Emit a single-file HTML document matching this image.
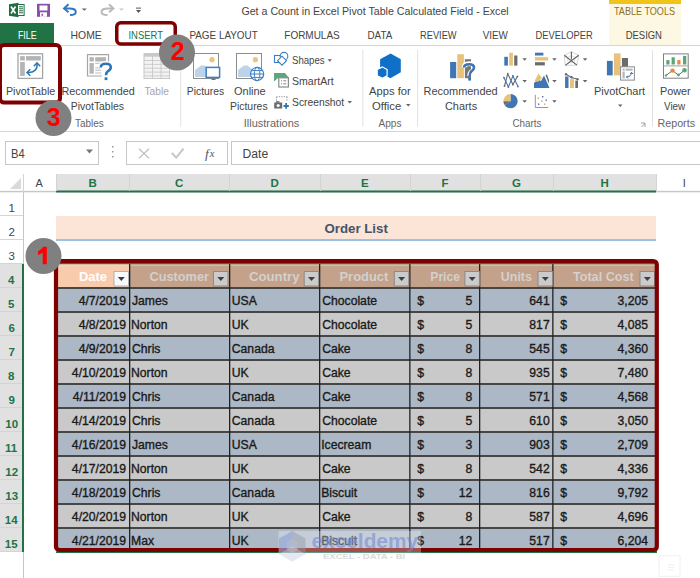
<!DOCTYPE html>
<html><head><meta charset="utf-8">
<style>
*{margin:0;padding:0}
html,body{width:700px;height:578px;overflow:hidden;background:#fff}
svg{position:absolute;left:0;top:0;font-family:"Liberation Sans",sans-serif}
</style></head><body>
<svg width="700" height="578" viewBox="0 0 700 578">
<rect x="609" y="0" width="72" height="45" fill="#fdf8e3"/>
<rect x="609" y="0" width="72" height="4" fill="#f0c419"/>
<rect x="0" y="23" width="54" height="22" fill="#217346"/>
<rect x="0" y="45" width="700" height="1" fill="#d5d5d5"/>
<rect x="0" y="131" width="700" height="1" fill="#d5d5d5"/>
<rect x="180.2" y="50" width="1" height="76.5" fill="#e1e1e1"/>
<rect x="362.3" y="50" width="1" height="76.5" fill="#e1e1e1"/>
<rect x="417.1" y="50" width="1" height="76.5" fill="#e1e1e1"/>
<rect x="652" y="50" width="1" height="76.5" fill="#e1e1e1"/>
<rect x="659" y="555.8" width="21" height="20.5" fill="#fff" stroke="#f0f0f0" stroke-width="1"/>
<path d="M668 565 h7 M668 567.5 h6 M668 570 h6" stroke="#eef1f5" stroke-width="1"/>
<g id="qat">
  <!-- excel logo -->
  <path d="M9 4.2 L18.5 2.7 L18.5 17.3 L9 15.8 Z" fill="#1d6f42"/>
  <rect x="17.5" y="4.5" width="6.6" height="11" fill="#fff" stroke="#1d6f42" stroke-width="1"/>
  <path d="M19 6.8 h4 M19 8.8 h4 M19 10.8 h4 M19 12.8 h4" stroke="#1d6f42" stroke-width="1"/>
  <path d="M11 6.5 L15.5 13.5 M15.5 6.5 L11 13.5" stroke="#fff" stroke-width="1.6"/>
  <!-- save -->
  <path d="M37 3.8 h13 v13 h-13 z" fill="#8c4ca8"/>
  <rect x="39.5" y="5.5" width="8" height="5" fill="#fff"/>
  <rect x="40" y="12.3" width="7" height="4.5" fill="#fff"/>
  <rect x="41.5" y="13.8" width="1.5" height="2" fill="#8c4ca8"/>
  <!-- undo -->
  <path d="M64.5 8.5 L69.5 8.5 Q75.8 8.5 75.8 12 Q75.8 15 70 15" fill="none" stroke="#2f78c1" stroke-width="1.9"/>
  <path d="M68.5 4.2 L64 8.5 L68.5 12.2" fill="none" stroke="#2f78c1" stroke-width="1.9"/>
  <path d="M81.7 8.4 h5.2 l-2.6 2.4z" fill="#666"/>
  <!-- redo -->
  <path d="M113 8.5 L108 8.5 Q101.5 8.5 101.5 12 Q101.5 15 107.5 15" fill="none" stroke="#b9b9b9" stroke-width="1.9"/>
  <path d="M109 4.2 L113.5 8.5 L109 12.2" fill="none" stroke="#b9b9b9" stroke-width="1.9"/>
  <path d="M119 8.4 h5 l-2.5 2.4z" fill="#c8c8c8"/>
  <!-- customize -->
  <rect x="136" y="7.6" width="5" height="1" fill="#555"/>
  <path d="M136 10 h5 l-2.5 3z" fill="#555"/>
</g>
<g id="ribbon">
  <!-- PivotTable -->
  <rect x="18" y="53.8" width="24.6" height="24.6" fill="#fff" stroke="#a6a6a6" stroke-width="1.3"/>
  <rect x="20.1" y="56.1" width="4.7" height="4.4" fill="#b4b4b4"/>
  <rect x="26" y="56.1" width="14.8" height="4.4" fill="#b4b4b4"/>
  <rect x="20.1" y="62" width="4.7" height="14" fill="#b4b4b4"/>
  <path d="M27.2 72.5 C34 73 37.8 69.5 37 63" fill="none" stroke="#2e75b6" stroke-width="1.6"/>
  <path d="M30.3 69.3 L27 72.5 L30.3 75.7 M33.8 66.2 L37 62.8 L40.2 66.2" fill="none" stroke="#2e75b6" stroke-width="1.5"/>
  <!-- Recommended PivotTables -->
  <path d="M102 76 H87.5 V54.7 H108.5 V62" fill="#fff" stroke="#a6a6a6" stroke-width="1.2"/>
  <rect x="89.5" y="57.2" width="4.3" height="4.3" fill="#b4b4b4"/>
  <rect x="95.2" y="57.2" width="10.8" height="4.3" fill="#b4b4b4"/>
  <rect x="89.5" y="63" width="4.3" height="10.7" fill="#b4b4b4"/>
  <path d="M95.2 63.3 h7 M95.2 68 h5 M95.2 70.3 h6 M95.2 73 h6" stroke="#b4b4b4" stroke-width="0.9"/>
  <path d="M100.8 67.5 Q100.8 63.3 106 63.3 Q111 63.3 111 67.2 Q111 70 108 71.5 Q106 72.5 106 75.3" fill="none" stroke="#fff" stroke-width="4.5"/>
  <path d="M100.8 67.5 Q100.8 63.8 106 63.8 Q110.8 63.8 110.8 67.2 Q110.8 69.6 108 71.2 Q106 72.4 106 75.3" fill="none" stroke="#2e75b6" stroke-width="2.6"/>
  <rect x="104.6" y="77.3" width="2.8" height="2.8" fill="#2e75b6"/>
  <!-- Table (disabled) -->
  <rect x="144" y="53.5" width="25.5" height="25" fill="#f3f3f3" stroke="#c8c8c8" stroke-width="1"/>
  <rect x="144" y="53.5" width="25.5" height="3.2" fill="#c8c8c8"/>
  <path d="M152.5 53.5 V78.5 M161 53.5 V78.5 M144 60.5 H169.5 M144 64.4 H169.5 M144 68.2 H169.5 M144 72.1 H169.5 M144 75.9 H169.5" stroke="#c8c8c8" stroke-width="0.9"/>
  <!-- Pictures -->
  <rect x="193.5" y="53.5" width="25" height="25" fill="#fff" stroke="#8c8c8c" stroke-width="1"/>
  <circle cx="212" cy="59.7" r="2.6" fill="#f0c27b"/>
  <path d="M195 77 V70 L201 65.5 L204.5 65.5 L210 70 V77 Z" fill="#bdd3e8"/>
  <rect x="206.2" y="67.4" width="13.4" height="10" fill="#fff" stroke="#3c7fc5" stroke-width="1.5"/>
  <path d="M211.5 79.3 h4 M213.5 77.8 v1.5" stroke="#3c7fc5" stroke-width="1.2"/>
  <!-- Online Pictures -->
  <rect x="236.5" y="53.5" width="25" height="25" fill="#fff" stroke="#8c8c8c" stroke-width="1"/>
  <circle cx="255.4" cy="59.7" r="2.6" fill="#f0c27b"/>
  <path d="M238 77 V70 L244 65.5 L247.5 65.5 L253 70 V77 Z" fill="#bdd3e8"/>
  <circle cx="257.1" cy="74" r="6.6" fill="#fff" stroke="#3c7fc5" stroke-width="1.2"/>
  <ellipse cx="257.1" cy="74" rx="2.8" ry="6.6" fill="none" stroke="#3c7fc5" stroke-width="1"/>
  <path d="M250.5 74 h13.2 M251.5 70.6 h11.2 M251.5 77.4 h11.2" stroke="#3c7fc5" stroke-width="1"/>
  <!-- Shapes -->
  <rect x="274.5" y="55.5" width="6.5" height="7" fill="none" stroke="#3c7fc5" stroke-width="1.1"/>
  <circle cx="284" cy="56.2" r="3.8" fill="#fff" stroke="#3c7fc5" stroke-width="1.1"/>
  <path d="M282 56.2 L286.5 60.7 L282 65.2 L277.5 60.7 Z" fill="#fff" stroke="#3c7fc5" stroke-width="1.1"/>
  <path d="M327.5 59.2 h4.5 l-2.25 2.5z" fill="#666"/>
  <!-- SmartArt -->
  <path d="M274 73 H285 L289 78 H278 L274 81.5 Z" fill="#5ba67c"/>
  <rect x="278.8" y="77.8" width="9.6" height="9.2" fill="#fff" stroke="#8a8a8a" stroke-width="1.2"/>
  <path d="M281 80.8 h1 M283.3 80.8 h3 M281 83.8 h1 M283.3 83.8 h3" stroke="#777" stroke-width="0.9"/>
  <!-- Screenshot -->
  <path d="M276.5 96.7 h11" stroke="#8a8a8a" stroke-width="0.9" stroke-dasharray="1.2 1.2"/>
  <path d="M276.5 97 v4 M287 97 v4" stroke="#8a8a8a" stroke-width="0.9" stroke-dasharray="1.2 1.2"/>
  <rect x="274.2" y="102.5" width="8" height="6" fill="#6b6b6b"/>
  <rect x="276" y="101.2" width="3.5" height="1.5" fill="#6b6b6b"/>
  <circle cx="278.2" cy="105.5" r="1.6" fill="#fff"/>
  <path d="M283.5 106 h5.3 M286.15 103 v5.8" stroke="#2e75b6" stroke-width="1.8"/>
  <path d="M347.5 101 h4.5 l-2.25 2.5z" fill="#666"/>
  <!-- Apps for Office -->
  <path d="M390.6 53.6 L400.8 59.2 L400.8 72.3 L390.4 78.2 L380.1 72.3 L380.1 59.2 Z" fill="#1070c8"/>
  <path d="M382.5 67 L387.1 69.5 L387.1 75.7 L382.5 78.2 L377.2 75.7 L377.2 69.5 Z" fill="#1070c8" stroke="#fff" stroke-width="1.2"/>
  <path d="M406 104 h4.5 l-2.25 2.5z" fill="#666"/>
  <!-- Recommended Charts -->
  <rect x="450.1" y="62" width="6.1" height="16.2" fill="#3f76b3"/>
  <rect x="457.3" y="54.2" width="6.6" height="24" fill="#e8c27a"/>
  <rect x="464.9" y="59.2" width="6.1" height="19" fill="#777"/>
  <path d="M464 67.5 Q464 63.6 469.2 63.6 Q474.5 63.6 474.5 67.5 Q474.5 70 471.5 71.8 Q469.6 72.9 469.6 76" fill="none" stroke="#fff" stroke-width="4.6"/>
  <path d="M464 67.5 Q464 64.2 469.2 64.2 Q474 64.2 474 67.5 Q474 69.8 471.4 71.4 Q469.6 72.6 469.6 76" fill="none" stroke="#3d74b5" stroke-width="2.6"/>
  <rect x="468.2" y="77.8" width="2.8" height="2.8" fill="#3d74b5"/>
  <!-- small charts row1 -->
  <rect x="504.3" y="56.8" width="3.6" height="8.8" fill="#3f76b3"/>
  <rect x="509.2" y="52.7" width="3.7" height="12.9" fill="#e8c27a"/>
  <rect x="514.2" y="55.5" width="3.2" height="10.1" fill="#6b6b6b"/>
  <rect x="535" y="52.7" width="8.4" height="2.8" fill="#3f76b3"/>
  <rect x="535" y="57.2" width="13.2" height="3.3" fill="#e8c27a"/>
  <rect x="535" y="62.2" width="9.8" height="3.2" fill="#6b6b6b"/>
  <g fill="none" stroke-linejoin="round">
    <path d="M571.4 51.7 L578.7 55.3 L576.9 65.1 L565.3 65.4 L564.3 55.3 Z" stroke="#cfcfcf" stroke-width="0.9"/>
    <path d="M571.4 55.5 L575.2 57.4 L574.2 62.6 L568.2 62.8 L567.6 57.4 Z" stroke="#d8d8d8" stroke-width="0.8"/>
    <path d="M571.4 51.7 V59.4 M578.7 55.3 L565.3 65.4 M564.3 55.3 L576.9 65.1" stroke="#5f5f5f" stroke-width="1.1"/>
  </g>
  <!-- row2 -->
  <path d="M504.5 86 L507.7 73.8 L512.9 84.5 L517.4 76.4" fill="none" stroke="#6b6b6b" stroke-width="1.1"/>
  <path d="M503.9 77.6 L508.4 87 L512.9 76 L518 86.6" fill="none" stroke="#3f76b3" stroke-width="1.1"/>
  <g fill="#6b6b6b"><circle cx="504.5" cy="86" r="0.9"/><circle cx="507.7" cy="73.8" r="0.9"/><circle cx="512.9" cy="84.5" r="0.9"/><circle cx="517.4" cy="76.4" r="0.9"/></g>
  <g fill="#3f76b3"><circle cx="503.9" cy="77.6" r="0.9"/><circle cx="508.4" cy="87" r="0.9"/><circle cx="512.9" cy="76" r="0.9"/><circle cx="518" cy="86.6" r="0.9"/></g>
  <path d="M534 88 L534 83 L538 79.5 L541 81 L544 75.5 L549.5 88 Z" fill="#3f76b3"/>
  <path d="M534.5 81 L538.5 73.5 L542 78 L538 82 Z" fill="#e8c27a"/>
  <path d="M545.5 75 L547 74.5 L549 80 L549 84 Z" fill="#6b6b6b"/>
  <rect x="565.1" y="76.5" width="3.4" height="11.5" fill="#3f76b3"/>
  <rect x="569.9" y="79.2" width="4.1" height="8.8" fill="#e8c27a"/>
  <rect x="575.3" y="80.6" width="2.7" height="7.4" fill="#6b6b6b"/>
  <path d="M566 74.3 L571.5 77.5 L577.5 79.3" stroke="#6b6b6b" stroke-width="1.1" fill="none"/>
  <circle cx="566" cy="74.3" r="1.2" fill="#6b6b6b"/><circle cx="571.5" cy="77.3" r="1.2" fill="#6b6b6b"/><circle cx="577.5" cy="79.3" r="1.2" fill="#6b6b6b"/>
  <!-- row3 -->
  <path d="M510.5 101.2 L510.5 94.1 A7.1 7.1 0 1 1 504.6 105.1 Z" fill="#3f76b3"/>
  <path d="M510.5 101.2 L503.4 101.2 A7.1 7.1 0 0 1 510.5 94.1 Z" fill="#e8c27a"/>
  <path d="M510.5 101.2 L504.6 105.1 A7.1 7.1 0 0 1 503.4 101.2 Z" fill="#6b6b6b"/>
  <path d="M535.3 94.8 V107.5 H548.2" fill="none" stroke="#8a8a8a" stroke-width="0.9"/>
  <rect x="537.5" y="97.5" width="1.4" height="1.4" fill="#e8a060"/>
  <rect x="542" y="96" width="1.4" height="1.4" fill="#3f76b3"/>
  <rect x="541" y="100.5" width="1.4" height="1.4" fill="#e8a060"/>
  <rect x="545.5" y="99.5" width="1.4" height="1.4" fill="#3f76b3"/>
  <rect x="538" y="103.5" width="1.4" height="1.4" fill="#3f76b3"/>
  <rect x="544" y="103.5" width="1.4" height="1.4" fill="#e8a060"/>
  <!-- dropdown triangles -->
  <g fill="#666">
    <path d="M522.4 58.3 h4.5 l-2.25 2.5z"/><path d="M552.2 58.3 h4.5 l-2.25 2.5z"/><path d="M582.8 58.3 h4.5 l-2.25 2.5z"/>
    <path d="M522.4 79.9 h4.5 l-2.25 2.5z"/><path d="M552.2 79.9 h4.5 l-2.25 2.5z"/><path d="M582.8 79.9 h4.5 l-2.25 2.5z"/>
    <path d="M522.4 100.3 h4.5 l-2.25 2.5z"/><path d="M552.2 100.3 h4.5 l-2.25 2.5z"/>
    <path d="M618 104.4 h4.5 l-2.25 2.5z"/>
  </g>
  <!-- PivotChart -->
  <rect x="606.9" y="60.9" width="5.8" height="14.5" fill="#3f76b3"/>
  <rect x="614" y="53.4" width="6.6" height="22" fill="#e8c27a"/>
  <rect x="621.9" y="58" width="6.1" height="9" fill="#6b6b6b"/>
  <rect x="620.6" y="66.8" width="13.8" height="13.3" fill="#fff" stroke="#8a8a8a" stroke-width="1"/>
  <rect x="622.5" y="68.6" width="2.2" height="2" fill="#b4b4b4"/>
  <rect x="625.6" y="68.6" width="7" height="2" fill="#b4b4b4"/>
  <rect x="622.5" y="71.6" width="2.2" height="6.8" fill="#b4b4b4"/>
  <path d="M626.5 77 Q631 77 631.5 72.5" fill="none" stroke="#2e75b6" stroke-width="1"/>
  <path d="M628 75.5 L626.5 77 L628 78.5 M630 74 L631.5 72.3 L633 74" fill="none" stroke="#2e75b6" stroke-width="1"/>
  <!-- Power View -->
  <rect x="663.5" y="53.9" width="24.7" height="24.3" fill="#fff" stroke="#808080" stroke-width="1"/>
  <path d="M663.5 65.9 H688.2" stroke="#a0a0a0" stroke-width="1"/>
  <rect x="666.3" y="60.1" width="3.2" height="4.4" fill="#5fa37a"/>
  <rect x="671.6" y="57.3" width="3.2" height="7.2" fill="#5fa37a"/>
  <rect x="677.3" y="60.1" width="3.2" height="4.4" fill="#e8883a"/>
  <rect x="683" y="55.9" width="3.3" height="8.6" fill="#5fa37a"/>
  <path d="M666 75.4 L672.5 70.6 L678.5 75 L684.5 70.3" fill="none" stroke="#6b6b6b" stroke-width="1"/>
  <circle cx="666" cy="75.4" r="1.2" fill="#5fa37a"/>
  <circle cx="672.5" cy="70.6" r="2.2" fill="#e8883a"/>
  <circle cx="678.5" cy="75" r="1.4" fill="#5fa37a"/>
  <circle cx="684.5" cy="70.3" r="2.3" fill="#5fa37a"/>
  <!-- dialog launcher -->
  <path d="M641 123 h4 v4" fill="none" stroke="#888" stroke-width="0.8"/>
  <path d="M641.5 127 L644.5 124" stroke="#888" stroke-width="0.8"/>
</g>
<rect x="5.5" y="141.5" width="93" height="23" fill="#fff" stroke="#c6c6c6"/>
<path d="M86 149.5 h7 l-3.5 4z" fill="#777"/>
<rect x="112" y="146" width="1.5" height="1.5" fill="#999"/>
<rect x="112" y="151" width="1.5" height="1.5" fill="#999"/>
<rect x="112" y="156" width="1.5" height="1.5" fill="#999"/>
<rect x="126.5" y="141.5" width="101" height="23" fill="#fff" stroke="#c6c6c6"/>
<path d="M139 148.7 L149 158.2 M149 148.7 L139 158.2" stroke="#c4c4c4" stroke-width="1.4" fill="none"/>
<path d="M171.8 152.8 L176.2 157.6 L183.5 148.6" stroke="#c4c4c4" stroke-width="1.9" fill="none"/>
<text x="205" y="158" font-family="Liberation Serif" font-style="italic" font-size="13.5" fill="#555">f</text>
<text x="209.8" y="157" font-family="Liberation Serif" font-style="italic" font-size="10.5" fill="#555">x</text>
<rect x="231.5" y="141.5" width="480" height="23" fill="#fff" stroke="#c6c6c6"/>
<rect x="0" y="174" width="700" height="18" fill="#fff"/>
<rect x="56" y="174" width="600" height="18" fill="#e1e1e1"/>
<rect x="0" y="190.8" width="700" height="1.5" fill="#c8c8c8"/>
<rect x="56" y="190.5" width="600" height="2" fill="#217346"/>
<rect x="56" y="174" width="1" height="17" fill="#d4d4d4"/>
<rect x="129" y="174" width="1" height="17" fill="#d4d4d4"/>
<rect x="229" y="174" width="1" height="17" fill="#d4d4d4"/>
<rect x="320" y="174" width="1" height="17" fill="#d4d4d4"/>
<rect x="410" y="174" width="1" height="17" fill="#d4d4d4"/>
<rect x="480" y="174" width="1" height="17" fill="#d4d4d4"/>
<rect x="553" y="174" width="1" height="17" fill="#d4d4d4"/>
<rect x="656" y="174" width="1" height="17" fill="#d4d4d4"/>
<rect x="720" y="174" width="1" height="17" fill="#d4d4d4"/>
<path d="M10 189 L21 189 L21 178 Z" fill="#dadada"/>
<rect x="23" y="174" width="1" height="18" fill="#d4d4d4"/>
<rect x="0" y="215" width="23" height="1" fill="#d4d4d4"/>
<rect x="0" y="239" width="23" height="1" fill="#d4d4d4"/>
<rect x="0" y="263" width="23" height="1" fill="#d4d4d4"/>
<rect x="0" y="264" width="23" height="24" fill="#e1e1e1"/>
<rect x="0" y="287" width="23" height="1" fill="#d4d4d4"/>
<rect x="0" y="288" width="23" height="24" fill="#e1e1e1"/>
<rect x="0" y="311" width="23" height="1" fill="#d4d4d4"/>
<rect x="0" y="312" width="23" height="24" fill="#e1e1e1"/>
<rect x="0" y="335" width="23" height="1" fill="#d4d4d4"/>
<rect x="0" y="336" width="23" height="24" fill="#e1e1e1"/>
<rect x="0" y="359" width="23" height="1" fill="#d4d4d4"/>
<rect x="0" y="360" width="23" height="24" fill="#e1e1e1"/>
<rect x="0" y="383" width="23" height="1" fill="#d4d4d4"/>
<rect x="0" y="384" width="23" height="24" fill="#e1e1e1"/>
<rect x="0" y="407" width="23" height="1" fill="#d4d4d4"/>
<rect x="0" y="408" width="23" height="24" fill="#e1e1e1"/>
<rect x="0" y="431" width="23" height="1" fill="#d4d4d4"/>
<rect x="0" y="432" width="23" height="24" fill="#e1e1e1"/>
<rect x="0" y="455" width="23" height="1" fill="#d4d4d4"/>
<rect x="0" y="456" width="23" height="24" fill="#e1e1e1"/>
<rect x="0" y="479" width="23" height="1" fill="#d4d4d4"/>
<rect x="0" y="480" width="23" height="24" fill="#e1e1e1"/>
<rect x="0" y="503" width="23" height="1" fill="#d4d4d4"/>
<rect x="0" y="504" width="23" height="24" fill="#e1e1e1"/>
<rect x="0" y="527" width="23" height="1" fill="#d4d4d4"/>
<rect x="0" y="528" width="23" height="24" fill="#e1e1e1"/>
<rect x="0" y="551" width="23" height="1" fill="#d4d4d4"/>
<rect x="23" y="192" width="1" height="386" fill="#c6c6c6"/>
<rect x="22" y="264" width="2" height="288" fill="#217346"/>
<rect x="56" y="216" width="600" height="23" fill="#fce4d6"/>
<rect x="56" y="239" width="600" height="2" fill="#9bc2e6"/>
<rect x="56" y="264" width="73" height="24" fill="#f8cbad"/>
<rect x="129" y="264" width="527" height="24" fill="#c4a18a"/>
<rect x="56" y="264.5" width="600" height="1" fill="#f3ddd0" opacity="0.8"/>
<rect x="56" y="288" width="600" height="24" fill="#acb8c5"/>
<rect x="56" y="312" width="600" height="24" fill="#c9c9c9"/>
<rect x="56" y="336" width="600" height="24" fill="#acb8c5"/>
<rect x="56" y="360" width="600" height="24" fill="#c9c9c9"/>
<rect x="56" y="384" width="600" height="24" fill="#acb8c5"/>
<rect x="56" y="408" width="600" height="24" fill="#c9c9c9"/>
<rect x="56" y="432" width="600" height="24" fill="#acb8c5"/>
<rect x="56" y="456" width="600" height="24" fill="#c9c9c9"/>
<rect x="56" y="480" width="600" height="24" fill="#acb8c5"/>
<rect x="56" y="504" width="600" height="24" fill="#c9c9c9"/>
<rect x="56" y="528" width="600" height="24" fill="#acb8c5"/>
<rect x="56" y="551.5" width="600" height="1.5" fill="#217346"/>
<rect x="56" y="287" width="600" height="2" fill="#464646"/>
<rect x="56" y="311" width="600" height="2" fill="#464646"/>
<rect x="56" y="335" width="600" height="2" fill="#464646"/>
<rect x="56" y="359" width="600" height="2" fill="#464646"/>
<rect x="56" y="383" width="600" height="2" fill="#464646"/>
<rect x="56" y="407" width="600" height="2" fill="#464646"/>
<rect x="56" y="431" width="600" height="2" fill="#464646"/>
<rect x="56" y="455" width="600" height="2" fill="#464646"/>
<rect x="56" y="479" width="600" height="2" fill="#464646"/>
<rect x="56" y="503" width="600" height="2" fill="#464646"/>
<rect x="56" y="527" width="600" height="2" fill="#464646"/>
<rect x="129" y="264" width="1.3" height="288" fill="#222"/>
<rect x="229" y="264" width="1.3" height="288" fill="#222"/>
<rect x="319" y="264" width="1.3" height="288" fill="#222"/>
<rect x="409.2" y="264" width="1.3" height="288" fill="#222"/>
<rect x="479" y="264" width="1.3" height="288" fill="#222"/>
<rect x="552.2" y="264" width="1.3" height="288" fill="#222"/>
<g id="texts">
<text x="241.40" y="15.4" font-size="11" fill="#444" textLength="267.33" lengthAdjust="spacingAndGlyphs">Get a Count in Excel Pivot Table Calculated Field - Excel</text>
<text x="614.00" y="15.4" font-size="11" fill="#8f6f22" textLength="60.98" lengthAdjust="spacingAndGlyphs">TABLE TOOLS</text>
<text x="17.90" y="38.8" font-size="11.5" fill="#fff" textLength="18.75" lengthAdjust="spacingAndGlyphs">FILE</text>
<text x="70.60" y="38.8" font-size="11.5" fill="#444" textLength="31.20" lengthAdjust="spacingAndGlyphs">HOME</text>
<text x="128.48" y="38.8" font-size="11.5" fill="#217346" textLength="34.44" lengthAdjust="spacingAndGlyphs">INSERT</text>
<text x="189.40" y="38.8" font-size="11.5" fill="#444" textLength="68.32" lengthAdjust="spacingAndGlyphs">PAGE LAYOUT</text>
<text x="284.30" y="38.8" font-size="11.5" fill="#444" textLength="55.41" lengthAdjust="spacingAndGlyphs">FORMULAS</text>
<text x="367.50" y="38.8" font-size="11.5" fill="#444" textLength="24.82" lengthAdjust="spacingAndGlyphs">DATA</text>
<text x="420.00" y="38.8" font-size="11.5" fill="#444" textLength="36.58" lengthAdjust="spacingAndGlyphs">REVIEW</text>
<text x="482.70" y="38.8" font-size="11.5" fill="#444" textLength="25.18" lengthAdjust="spacingAndGlyphs">VIEW</text>
<text x="535.50" y="38.8" font-size="11.5" fill="#444" textLength="57.15" lengthAdjust="spacingAndGlyphs">DEVELOPER</text>
<text x="625.70" y="38.8" font-size="11.5" fill="#444" textLength="36.25" lengthAdjust="spacingAndGlyphs">DESIGN</text>
<text x="5.90" y="94.7" font-size="11.2" fill="#444" textLength="49.41" lengthAdjust="spacingAndGlyphs">PivotTable</text>
<text x="61.50" y="94.7" font-size="11.2" fill="#444" textLength="73.21" lengthAdjust="spacingAndGlyphs">Recommended</text>
<text x="70.80" y="109.5" font-size="11.2" fill="#444" textLength="53.12" lengthAdjust="spacingAndGlyphs">PivotTables</text>
<text x="144.50" y="94.7" font-size="11.2" fill="#a6a6a6" textLength="24.30" lengthAdjust="spacingAndGlyphs">Table</text>
<text x="75.00" y="126.5" font-size="10" fill="#666" textLength="28.70" lengthAdjust="spacingAndGlyphs">Tables</text>
<text x="186.80" y="94.7" font-size="11.2" fill="#444" textLength="37.32" lengthAdjust="spacingAndGlyphs">Pictures</text>
<text x="234.00" y="94.7" font-size="11.2" fill="#444" textLength="31.72" lengthAdjust="spacingAndGlyphs">Online</text>
<text x="230.00" y="109.5" font-size="11.2" fill="#444" textLength="37.62" lengthAdjust="spacingAndGlyphs">Pictures</text>
<text x="292.00" y="63.9" font-size="11.2" fill="#444" textLength="32.65" lengthAdjust="spacingAndGlyphs">Shapes</text>
<text x="292.00" y="85" font-size="11.2" fill="#444" textLength="41.66" lengthAdjust="spacingAndGlyphs">SmartArt</text>
<text x="292.00" y="105.5" font-size="11.2" fill="#444" textLength="52.18" lengthAdjust="spacingAndGlyphs">Screenshot</text>
<text x="243.80" y="126.5" font-size="10" fill="#666" textLength="55.50" lengthAdjust="spacingAndGlyphs">Illustrations</text>
<text x="369.00" y="94.7" font-size="11.2" fill="#444" textLength="41.73" lengthAdjust="spacingAndGlyphs">Apps for</text>
<text x="372.00" y="109.5" font-size="11.2" fill="#444" textLength="29.22" lengthAdjust="spacingAndGlyphs">Office</text>
<text x="378.50" y="126.5" font-size="10" fill="#666" textLength="23.00" lengthAdjust="spacingAndGlyphs">Apps</text>
<text x="423.50" y="94.7" font-size="11.2" fill="#444" textLength="74.22" lengthAdjust="spacingAndGlyphs">Recommended</text>
<text x="445.00" y="109.5" font-size="11.2" fill="#444" textLength="32.10" lengthAdjust="spacingAndGlyphs">Charts</text>
<text x="512.50" y="126.5" font-size="10" fill="#666" textLength="29.00" lengthAdjust="spacingAndGlyphs">Charts</text>
<text x="594.00" y="94.7" font-size="11.2" fill="#444" textLength="51.13" lengthAdjust="spacingAndGlyphs">PivotChart</text>
<text x="660.00" y="94.7" font-size="11.2" fill="#444" textLength="30.73" lengthAdjust="spacingAndGlyphs">Power</text>
<text x="664.00" y="109.5" font-size="11.2" fill="#444" textLength="21.19" lengthAdjust="spacingAndGlyphs">View</text>
<text x="657.50" y="126.5" font-size="10" fill="#666" textLength="37.50" lengthAdjust="spacingAndGlyphs">Reports</text>
<text x="11.00" y="157.5" font-size="12" fill="#444" textLength="13.70" lengthAdjust="spacingAndGlyphs">B4</text>
<text x="242.50" y="157.5" font-size="12" fill="#444" textLength="25.67" lengthAdjust="spacingAndGlyphs">Date</text>
<text x="35.50" y="186.6" font-size="11" fill="#444" textLength="7.34" lengthAdjust="spacingAndGlyphs">A</text>
<text x="88.50" y="186.6" font-size="11.5" fill="#217346" font-weight="bold" textLength="8.30" lengthAdjust="spacingAndGlyphs">B</text>
<text x="175.00" y="186.6" font-size="11.5" fill="#217346" font-weight="bold" textLength="8.30" lengthAdjust="spacingAndGlyphs">C</text>
<text x="270.50" y="186.6" font-size="11.5" fill="#217346" font-weight="bold" textLength="8.30" lengthAdjust="spacingAndGlyphs">D</text>
<text x="361.00" y="186.6" font-size="11.5" fill="#217346" font-weight="bold" textLength="7.67" lengthAdjust="spacingAndGlyphs">E</text>
<text x="441.50" y="186.6" font-size="11.5" fill="#217346" font-weight="bold" textLength="7.02" lengthAdjust="spacingAndGlyphs">F</text>
<text x="512.00" y="186.6" font-size="11.5" fill="#217346" font-weight="bold" textLength="8.95" lengthAdjust="spacingAndGlyphs">G</text>
<text x="600.50" y="186.6" font-size="11.5" fill="#217346" font-weight="bold" textLength="8.30" lengthAdjust="spacingAndGlyphs">H</text>
<text x="682.80" y="186.6" font-size="11" fill="#444" textLength="3.06" lengthAdjust="spacingAndGlyphs">I</text>
<text x="8.50" y="211.5" font-size="11.5" fill="#444" textLength="6.40" lengthAdjust="spacingAndGlyphs">1</text>
<text x="8.50" y="235.5" font-size="11.5" fill="#444" textLength="6.40" lengthAdjust="spacingAndGlyphs">2</text>
<text x="8.50" y="259.5" font-size="11.5" fill="#444" textLength="6.40" lengthAdjust="spacingAndGlyphs">3</text>
<text x="8.00" y="283.5" font-size="11.5" fill="#217346" font-weight="bold" textLength="6.40" lengthAdjust="spacingAndGlyphs">4</text>
<text x="8.00" y="307.5" font-size="11.5" fill="#217346" font-weight="bold" textLength="6.40" lengthAdjust="spacingAndGlyphs">5</text>
<text x="8.50" y="331.5" font-size="11.5" fill="#217346" font-weight="bold" textLength="6.40" lengthAdjust="spacingAndGlyphs">6</text>
<text x="8.50" y="355.5" font-size="11.5" fill="#217346" font-weight="bold" textLength="6.40" lengthAdjust="spacingAndGlyphs">7</text>
<text x="8.00" y="379.5" font-size="11.5" fill="#217346" font-weight="bold" textLength="6.40" lengthAdjust="spacingAndGlyphs">8</text>
<text x="8.50" y="403.5" font-size="11.5" fill="#217346" font-weight="bold" textLength="6.40" lengthAdjust="spacingAndGlyphs">9</text>
<text x="5.30" y="427.5" font-size="11.5" fill="#217346" font-weight="bold" textLength="12.79" lengthAdjust="spacingAndGlyphs">10</text>
<text x="5.12" y="451.5" font-size="11.5" fill="#217346" font-weight="bold" textLength="12.16" lengthAdjust="spacingAndGlyphs">11</text>
<text x="5.30" y="475.5" font-size="11.5" fill="#217346" font-weight="bold" textLength="12.79" lengthAdjust="spacingAndGlyphs">12</text>
<text x="5.30" y="499.5" font-size="11.5" fill="#217346" font-weight="bold" textLength="12.79" lengthAdjust="spacingAndGlyphs">13</text>
<text x="4.80" y="523.5" font-size="11.5" fill="#217346" font-weight="bold" textLength="12.79" lengthAdjust="spacingAndGlyphs">14</text>
<text x="4.80" y="547.5" font-size="11.5" fill="#217346" font-weight="bold" textLength="12.79" lengthAdjust="spacingAndGlyphs">15</text>
<text x="324.50" y="232.8" font-size="13.5" fill="#44546a" font-weight="bold" textLength="63.31" lengthAdjust="spacingAndGlyphs">Order List</text>
<text x="78.90" y="280.8" font-size="12.5" fill="#ffffff" font-weight="bold" textLength="28.15" lengthAdjust="spacingAndGlyphs">Date</text>
<text x="149.50" y="280.8" font-size="12.5" fill="#d3d0cd" font-weight="bold" textLength="59.46" lengthAdjust="spacingAndGlyphs">Customer</text>
<text x="248.90" y="280.8" font-size="12.5" fill="#d3d0cd" font-weight="bold" textLength="50.65" lengthAdjust="spacingAndGlyphs">Country</text>
<text x="339.50" y="280.8" font-size="12.5" fill="#d3d0cd" font-weight="bold" textLength="48.83" lengthAdjust="spacingAndGlyphs">Product</text>
<text x="430.30" y="280.8" font-size="12.5" fill="#d3d0cd" font-weight="bold" textLength="29.65" lengthAdjust="spacingAndGlyphs">Price</text>
<text x="500.80" y="280.8" font-size="12.5" fill="#d3d0cd" font-weight="bold" textLength="31.15" lengthAdjust="spacingAndGlyphs">Units</text>
<text x="572.90" y="280.8" font-size="12.5" fill="#d3d0cd" font-weight="bold" textLength="60.85" lengthAdjust="spacingAndGlyphs">Total Cost</text>
<text x="78.64" y="305.1" font-size="12.2" fill="#1a1a1a" stroke="#1a1a1a" stroke-width="0.35" textLength="47.44" lengthAdjust="spacingAndGlyphs">4/7/2019</text>
<text x="132.00" y="305.1" font-size="12.2" fill="#1a1a1a" stroke="#1a1a1a" stroke-width="0.35" textLength="35.90" lengthAdjust="spacingAndGlyphs">James</text>
<text x="231.80" y="305.1" font-size="12.2" fill="#1a1a1a" stroke="#1a1a1a" stroke-width="0.35" textLength="25.06" lengthAdjust="spacingAndGlyphs">USA</text>
<text x="322.20" y="305.1" font-size="12.2" fill="#1a1a1a" stroke="#1a1a1a" stroke-width="0.35" textLength="54.88" lengthAdjust="spacingAndGlyphs">Chocolate</text>
<text x="417.30" y="305.1" font-size="12.2" fill="#1a1a1a" stroke="#1a1a1a" stroke-width="0.35" textLength="6.78" lengthAdjust="spacingAndGlyphs">$</text>
<text x="465.60" y="305.1" font-size="12.2" fill="#1a1a1a" stroke="#1a1a1a" stroke-width="0.35" textLength="6.78" lengthAdjust="spacingAndGlyphs">5</text>
<text x="529.34" y="305.1" font-size="12.2" fill="#1a1a1a" stroke="#1a1a1a" stroke-width="0.35" textLength="20.33" lengthAdjust="spacingAndGlyphs">641</text>
<text x="560.30" y="305.1" font-size="12.2" fill="#1a1a1a" stroke="#1a1a1a" stroke-width="0.35" textLength="6.78" lengthAdjust="spacingAndGlyphs">$</text>
<text x="617.58" y="305.1" font-size="12.2" fill="#1a1a1a" stroke="#1a1a1a" stroke-width="0.35" textLength="30.50" lengthAdjust="spacingAndGlyphs">3,205</text>
<text x="78.64" y="329.1" font-size="12.2" fill="#1a1a1a" stroke="#1a1a1a" stroke-width="0.35" textLength="47.44" lengthAdjust="spacingAndGlyphs">4/8/2019</text>
<text x="131.00" y="329.1" font-size="12.2" fill="#1a1a1a" stroke="#1a1a1a" stroke-width="0.35" textLength="36.58" lengthAdjust="spacingAndGlyphs">Norton</text>
<text x="231.80" y="329.1" font-size="12.2" fill="#1a1a1a" stroke="#1a1a1a" stroke-width="0.35" textLength="16.93" lengthAdjust="spacingAndGlyphs">UK</text>
<text x="322.20" y="329.1" font-size="12.2" fill="#1a1a1a" stroke="#1a1a1a" stroke-width="0.35" textLength="54.88" lengthAdjust="spacingAndGlyphs">Chocolate</text>
<text x="417.30" y="329.1" font-size="12.2" fill="#1a1a1a" stroke="#1a1a1a" stroke-width="0.35" textLength="6.78" lengthAdjust="spacingAndGlyphs">$</text>
<text x="465.60" y="329.1" font-size="12.2" fill="#1a1a1a" stroke="#1a1a1a" stroke-width="0.35" textLength="6.78" lengthAdjust="spacingAndGlyphs">5</text>
<text x="529.34" y="329.1" font-size="12.2" fill="#1a1a1a" stroke="#1a1a1a" stroke-width="0.35" textLength="20.33" lengthAdjust="spacingAndGlyphs">817</text>
<text x="560.30" y="329.1" font-size="12.2" fill="#1a1a1a" stroke="#1a1a1a" stroke-width="0.35" textLength="6.78" lengthAdjust="spacingAndGlyphs">$</text>
<text x="617.58" y="329.1" font-size="12.2" fill="#1a1a1a" stroke="#1a1a1a" stroke-width="0.35" textLength="30.50" lengthAdjust="spacingAndGlyphs">4,085</text>
<text x="78.64" y="353.1" font-size="12.2" fill="#1a1a1a" stroke="#1a1a1a" stroke-width="0.35" textLength="47.44" lengthAdjust="spacingAndGlyphs">4/9/2019</text>
<text x="132.00" y="353.1" font-size="12.2" fill="#1a1a1a" stroke="#1a1a1a" stroke-width="0.35" textLength="28.44" lengthAdjust="spacingAndGlyphs">Chris</text>
<text x="231.80" y="353.1" font-size="12.2" fill="#1a1a1a" stroke="#1a1a1a" stroke-width="0.35" textLength="42.69" lengthAdjust="spacingAndGlyphs">Canada</text>
<text x="322.20" y="353.1" font-size="12.2" fill="#1a1a1a" stroke="#1a1a1a" stroke-width="0.35" textLength="28.45" lengthAdjust="spacingAndGlyphs">Cake</text>
<text x="417.30" y="353.1" font-size="12.2" fill="#1a1a1a" stroke="#1a1a1a" stroke-width="0.35" textLength="6.78" lengthAdjust="spacingAndGlyphs">$</text>
<text x="465.60" y="353.1" font-size="12.2" fill="#1a1a1a" stroke="#1a1a1a" stroke-width="0.35" textLength="6.78" lengthAdjust="spacingAndGlyphs">8</text>
<text x="529.34" y="353.1" font-size="12.2" fill="#1a1a1a" stroke="#1a1a1a" stroke-width="0.35" textLength="20.33" lengthAdjust="spacingAndGlyphs">545</text>
<text x="560.30" y="353.1" font-size="12.2" fill="#1a1a1a" stroke="#1a1a1a" stroke-width="0.35" textLength="6.78" lengthAdjust="spacingAndGlyphs">$</text>
<text x="617.58" y="353.1" font-size="12.2" fill="#1a1a1a" stroke="#1a1a1a" stroke-width="0.35" textLength="30.50" lengthAdjust="spacingAndGlyphs">4,360</text>
<text x="71.86" y="377.1" font-size="12.2" fill="#1a1a1a" stroke="#1a1a1a" stroke-width="0.35" textLength="54.22" lengthAdjust="spacingAndGlyphs">4/10/2019</text>
<text x="131.00" y="377.1" font-size="12.2" fill="#1a1a1a" stroke="#1a1a1a" stroke-width="0.35" textLength="36.58" lengthAdjust="spacingAndGlyphs">Norton</text>
<text x="231.80" y="377.1" font-size="12.2" fill="#1a1a1a" stroke="#1a1a1a" stroke-width="0.35" textLength="16.93" lengthAdjust="spacingAndGlyphs">UK</text>
<text x="322.20" y="377.1" font-size="12.2" fill="#1a1a1a" stroke="#1a1a1a" stroke-width="0.35" textLength="28.45" lengthAdjust="spacingAndGlyphs">Cake</text>
<text x="417.30" y="377.1" font-size="12.2" fill="#1a1a1a" stroke="#1a1a1a" stroke-width="0.35" textLength="6.78" lengthAdjust="spacingAndGlyphs">$</text>
<text x="465.60" y="377.1" font-size="12.2" fill="#1a1a1a" stroke="#1a1a1a" stroke-width="0.35" textLength="6.78" lengthAdjust="spacingAndGlyphs">8</text>
<text x="529.34" y="377.1" font-size="12.2" fill="#1a1a1a" stroke="#1a1a1a" stroke-width="0.35" textLength="20.33" lengthAdjust="spacingAndGlyphs">935</text>
<text x="560.30" y="377.1" font-size="12.2" fill="#1a1a1a" stroke="#1a1a1a" stroke-width="0.35" textLength="6.78" lengthAdjust="spacingAndGlyphs">$</text>
<text x="617.58" y="377.1" font-size="12.2" fill="#1a1a1a" stroke="#1a1a1a" stroke-width="0.35" textLength="30.50" lengthAdjust="spacingAndGlyphs">7,480</text>
<text x="72.76" y="401.1" font-size="12.2" fill="#1a1a1a" stroke="#1a1a1a" stroke-width="0.35" textLength="53.31" lengthAdjust="spacingAndGlyphs">4/11/2019</text>
<text x="132.00" y="401.1" font-size="12.2" fill="#1a1a1a" stroke="#1a1a1a" stroke-width="0.35" textLength="28.44" lengthAdjust="spacingAndGlyphs">Chris</text>
<text x="231.80" y="401.1" font-size="12.2" fill="#1a1a1a" stroke="#1a1a1a" stroke-width="0.35" textLength="42.69" lengthAdjust="spacingAndGlyphs">Canada</text>
<text x="322.20" y="401.1" font-size="12.2" fill="#1a1a1a" stroke="#1a1a1a" stroke-width="0.35" textLength="28.45" lengthAdjust="spacingAndGlyphs">Cake</text>
<text x="417.30" y="401.1" font-size="12.2" fill="#1a1a1a" stroke="#1a1a1a" stroke-width="0.35" textLength="6.78" lengthAdjust="spacingAndGlyphs">$</text>
<text x="465.60" y="401.1" font-size="12.2" fill="#1a1a1a" stroke="#1a1a1a" stroke-width="0.35" textLength="6.78" lengthAdjust="spacingAndGlyphs">8</text>
<text x="529.34" y="401.1" font-size="12.2" fill="#1a1a1a" stroke="#1a1a1a" stroke-width="0.35" textLength="20.33" lengthAdjust="spacingAndGlyphs">571</text>
<text x="560.30" y="401.1" font-size="12.2" fill="#1a1a1a" stroke="#1a1a1a" stroke-width="0.35" textLength="6.78" lengthAdjust="spacingAndGlyphs">$</text>
<text x="617.58" y="401.1" font-size="12.2" fill="#1a1a1a" stroke="#1a1a1a" stroke-width="0.35" textLength="30.50" lengthAdjust="spacingAndGlyphs">4,568</text>
<text x="71.86" y="425.1" font-size="12.2" fill="#1a1a1a" stroke="#1a1a1a" stroke-width="0.35" textLength="54.22" lengthAdjust="spacingAndGlyphs">4/14/2019</text>
<text x="132.00" y="425.1" font-size="12.2" fill="#1a1a1a" stroke="#1a1a1a" stroke-width="0.35" textLength="28.44" lengthAdjust="spacingAndGlyphs">Chris</text>
<text x="231.80" y="425.1" font-size="12.2" fill="#1a1a1a" stroke="#1a1a1a" stroke-width="0.35" textLength="42.69" lengthAdjust="spacingAndGlyphs">Canada</text>
<text x="322.20" y="425.1" font-size="12.2" fill="#1a1a1a" stroke="#1a1a1a" stroke-width="0.35" textLength="54.88" lengthAdjust="spacingAndGlyphs">Chocolate</text>
<text x="417.30" y="425.1" font-size="12.2" fill="#1a1a1a" stroke="#1a1a1a" stroke-width="0.35" textLength="6.78" lengthAdjust="spacingAndGlyphs">$</text>
<text x="465.60" y="425.1" font-size="12.2" fill="#1a1a1a" stroke="#1a1a1a" stroke-width="0.35" textLength="6.78" lengthAdjust="spacingAndGlyphs">5</text>
<text x="529.34" y="425.1" font-size="12.2" fill="#1a1a1a" stroke="#1a1a1a" stroke-width="0.35" textLength="20.33" lengthAdjust="spacingAndGlyphs">610</text>
<text x="560.30" y="425.1" font-size="12.2" fill="#1a1a1a" stroke="#1a1a1a" stroke-width="0.35" textLength="6.78" lengthAdjust="spacingAndGlyphs">$</text>
<text x="617.58" y="425.1" font-size="12.2" fill="#1a1a1a" stroke="#1a1a1a" stroke-width="0.35" textLength="30.50" lengthAdjust="spacingAndGlyphs">3,050</text>
<text x="71.86" y="449.1" font-size="12.2" fill="#1a1a1a" stroke="#1a1a1a" stroke-width="0.35" textLength="54.22" lengthAdjust="spacingAndGlyphs">4/16/2019</text>
<text x="132.00" y="449.1" font-size="12.2" fill="#1a1a1a" stroke="#1a1a1a" stroke-width="0.35" textLength="35.90" lengthAdjust="spacingAndGlyphs">James</text>
<text x="231.80" y="449.1" font-size="12.2" fill="#1a1a1a" stroke="#1a1a1a" stroke-width="0.35" textLength="25.06" lengthAdjust="spacingAndGlyphs">USA</text>
<text x="321.20" y="449.1" font-size="12.2" fill="#1a1a1a" stroke="#1a1a1a" stroke-width="0.35" textLength="50.12" lengthAdjust="spacingAndGlyphs">Icecream</text>
<text x="417.30" y="449.1" font-size="12.2" fill="#1a1a1a" stroke="#1a1a1a" stroke-width="0.35" textLength="6.78" lengthAdjust="spacingAndGlyphs">$</text>
<text x="465.60" y="449.1" font-size="12.2" fill="#1a1a1a" stroke="#1a1a1a" stroke-width="0.35" textLength="6.78" lengthAdjust="spacingAndGlyphs">3</text>
<text x="529.34" y="449.1" font-size="12.2" fill="#1a1a1a" stroke="#1a1a1a" stroke-width="0.35" textLength="20.33" lengthAdjust="spacingAndGlyphs">903</text>
<text x="560.30" y="449.1" font-size="12.2" fill="#1a1a1a" stroke="#1a1a1a" stroke-width="0.35" textLength="6.78" lengthAdjust="spacingAndGlyphs">$</text>
<text x="617.58" y="449.1" font-size="12.2" fill="#1a1a1a" stroke="#1a1a1a" stroke-width="0.35" textLength="30.50" lengthAdjust="spacingAndGlyphs">2,709</text>
<text x="71.86" y="473.1" font-size="12.2" fill="#1a1a1a" stroke="#1a1a1a" stroke-width="0.35" textLength="54.22" lengthAdjust="spacingAndGlyphs">4/17/2019</text>
<text x="131.00" y="473.1" font-size="12.2" fill="#1a1a1a" stroke="#1a1a1a" stroke-width="0.35" textLength="36.58" lengthAdjust="spacingAndGlyphs">Norton</text>
<text x="231.80" y="473.1" font-size="12.2" fill="#1a1a1a" stroke="#1a1a1a" stroke-width="0.35" textLength="16.93" lengthAdjust="spacingAndGlyphs">UK</text>
<text x="322.20" y="473.1" font-size="12.2" fill="#1a1a1a" stroke="#1a1a1a" stroke-width="0.35" textLength="28.45" lengthAdjust="spacingAndGlyphs">Cake</text>
<text x="417.30" y="473.1" font-size="12.2" fill="#1a1a1a" stroke="#1a1a1a" stroke-width="0.35" textLength="6.78" lengthAdjust="spacingAndGlyphs">$</text>
<text x="465.60" y="473.1" font-size="12.2" fill="#1a1a1a" stroke="#1a1a1a" stroke-width="0.35" textLength="6.78" lengthAdjust="spacingAndGlyphs">8</text>
<text x="529.34" y="473.1" font-size="12.2" fill="#1a1a1a" stroke="#1a1a1a" stroke-width="0.35" textLength="20.33" lengthAdjust="spacingAndGlyphs">542</text>
<text x="560.30" y="473.1" font-size="12.2" fill="#1a1a1a" stroke="#1a1a1a" stroke-width="0.35" textLength="6.78" lengthAdjust="spacingAndGlyphs">$</text>
<text x="617.58" y="473.1" font-size="12.2" fill="#1a1a1a" stroke="#1a1a1a" stroke-width="0.35" textLength="30.50" lengthAdjust="spacingAndGlyphs">4,336</text>
<text x="71.86" y="497.1" font-size="12.2" fill="#1a1a1a" stroke="#1a1a1a" stroke-width="0.35" textLength="54.22" lengthAdjust="spacingAndGlyphs">4/18/2019</text>
<text x="132.00" y="497.1" font-size="12.2" fill="#1a1a1a" stroke="#1a1a1a" stroke-width="0.35" textLength="28.44" lengthAdjust="spacingAndGlyphs">Chris</text>
<text x="231.80" y="497.1" font-size="12.2" fill="#1a1a1a" stroke="#1a1a1a" stroke-width="0.35" textLength="42.69" lengthAdjust="spacingAndGlyphs">Canada</text>
<text x="321.20" y="497.1" font-size="12.2" fill="#1a1a1a" stroke="#1a1a1a" stroke-width="0.35" textLength="35.90" lengthAdjust="spacingAndGlyphs">Biscuit</text>
<text x="417.30" y="497.1" font-size="12.2" fill="#1a1a1a" stroke="#1a1a1a" stroke-width="0.35" textLength="6.78" lengthAdjust="spacingAndGlyphs">$</text>
<text x="458.82" y="497.1" font-size="12.2" fill="#1a1a1a" stroke="#1a1a1a" stroke-width="0.35" textLength="13.56" lengthAdjust="spacingAndGlyphs">12</text>
<text x="529.34" y="497.1" font-size="12.2" fill="#1a1a1a" stroke="#1a1a1a" stroke-width="0.35" textLength="20.33" lengthAdjust="spacingAndGlyphs">816</text>
<text x="560.30" y="497.1" font-size="12.2" fill="#1a1a1a" stroke="#1a1a1a" stroke-width="0.35" textLength="6.78" lengthAdjust="spacingAndGlyphs">$</text>
<text x="617.58" y="497.1" font-size="12.2" fill="#1a1a1a" stroke="#1a1a1a" stroke-width="0.35" textLength="30.50" lengthAdjust="spacingAndGlyphs">9,792</text>
<text x="71.86" y="521.1" font-size="12.2" fill="#1a1a1a" stroke="#1a1a1a" stroke-width="0.35" textLength="54.22" lengthAdjust="spacingAndGlyphs">4/20/2019</text>
<text x="131.00" y="521.1" font-size="12.2" fill="#1a1a1a" stroke="#1a1a1a" stroke-width="0.35" textLength="36.58" lengthAdjust="spacingAndGlyphs">Norton</text>
<text x="231.80" y="521.1" font-size="12.2" fill="#1a1a1a" stroke="#1a1a1a" stroke-width="0.35" textLength="16.93" lengthAdjust="spacingAndGlyphs">UK</text>
<text x="322.20" y="521.1" font-size="12.2" fill="#1a1a1a" stroke="#1a1a1a" stroke-width="0.35" textLength="28.45" lengthAdjust="spacingAndGlyphs">Cake</text>
<text x="417.30" y="521.1" font-size="12.2" fill="#1a1a1a" stroke="#1a1a1a" stroke-width="0.35" textLength="6.78" lengthAdjust="spacingAndGlyphs">$</text>
<text x="465.60" y="521.1" font-size="12.2" fill="#1a1a1a" stroke="#1a1a1a" stroke-width="0.35" textLength="6.78" lengthAdjust="spacingAndGlyphs">8</text>
<text x="529.34" y="521.1" font-size="12.2" fill="#1a1a1a" stroke="#1a1a1a" stroke-width="0.35" textLength="20.33" lengthAdjust="spacingAndGlyphs">587</text>
<text x="560.30" y="521.1" font-size="12.2" fill="#1a1a1a" stroke="#1a1a1a" stroke-width="0.35" textLength="6.78" lengthAdjust="spacingAndGlyphs">$</text>
<text x="617.58" y="521.1" font-size="12.2" fill="#1a1a1a" stroke="#1a1a1a" stroke-width="0.35" textLength="30.50" lengthAdjust="spacingAndGlyphs">4,696</text>
<text x="71.86" y="545.1" font-size="12.2" fill="#1a1a1a" stroke="#1a1a1a" stroke-width="0.35" textLength="54.22" lengthAdjust="spacingAndGlyphs">4/21/2019</text>
<text x="131.00" y="545.1" font-size="12.2" fill="#1a1a1a" stroke="#1a1a1a" stroke-width="0.35" textLength="23.02" lengthAdjust="spacingAndGlyphs">Max</text>
<text x="231.80" y="545.1" font-size="12.2" fill="#1a1a1a" stroke="#1a1a1a" stroke-width="0.35" textLength="16.93" lengthAdjust="spacingAndGlyphs">UK</text>
<text x="321.20" y="545.1" font-size="12.2" fill="#1a1a1a" stroke="#1a1a1a" stroke-width="0.35" textLength="35.90" lengthAdjust="spacingAndGlyphs">Biscuit</text>
<text x="417.30" y="545.1" font-size="12.2" fill="#1a1a1a" stroke="#1a1a1a" stroke-width="0.35" textLength="6.78" lengthAdjust="spacingAndGlyphs">$</text>
<text x="458.82" y="545.1" font-size="12.2" fill="#1a1a1a" stroke="#1a1a1a" stroke-width="0.35" textLength="13.56" lengthAdjust="spacingAndGlyphs">12</text>
<text x="529.34" y="545.1" font-size="12.2" fill="#1a1a1a" stroke="#1a1a1a" stroke-width="0.35" textLength="20.33" lengthAdjust="spacingAndGlyphs">517</text>
<text x="560.30" y="545.1" font-size="12.2" fill="#1a1a1a" stroke="#1a1a1a" stroke-width="0.35" textLength="6.78" lengthAdjust="spacingAndGlyphs">$</text>
<text x="617.58" y="545.1" font-size="12.2" fill="#1a1a1a" stroke="#1a1a1a" stroke-width="0.35" textLength="30.50" lengthAdjust="spacingAndGlyphs">6,204</text>
</g>
<rect x="114.0" y="271.5" width="14.5" height="14.5" fill="#f7f9fb" stroke="#a9b3bd" stroke-width="1"/>
<path d="M117.8 277 h7 l-3.5 4z" fill="#3f3f3f"/>
<rect x="213.5" y="271.5" width="14.5" height="14.5" fill="#cbcbcb" stroke="#8a8a8a" stroke-width="1"/>
<path d="M217.3 277 h7 l-3.5 4z" fill="#3f3f3f"/>
<rect x="304.2" y="271.5" width="14.5" height="14.5" fill="#cbcbcb" stroke="#8a8a8a" stroke-width="1"/>
<path d="M308.0 277 h7 l-3.5 4z" fill="#3f3f3f"/>
<rect x="394.3" y="271.5" width="14.5" height="14.5" fill="#cbcbcb" stroke="#8a8a8a" stroke-width="1"/>
<path d="M398.1 277 h7 l-3.5 4z" fill="#3f3f3f"/>
<rect x="464.9" y="271.5" width="14.5" height="14.5" fill="#cbcbcb" stroke="#8a8a8a" stroke-width="1"/>
<path d="M468.7 277 h7 l-3.5 4z" fill="#3f3f3f"/>
<rect x="538.0" y="271.5" width="14.5" height="14.5" fill="#cbcbcb" stroke="#8a8a8a" stroke-width="1"/>
<path d="M541.8 277 h7 l-3.5 4z" fill="#3f3f3f"/>
<rect x="640.0" y="271.5" width="14.5" height="14.5" fill="#cbcbcb" stroke="#8a8a8a" stroke-width="1"/>
<path d="M643.8 277 h7 l-3.5 4z" fill="#3f3f3f"/>
<rect x="0" y="45" width="60" height="57.5" rx="4" fill="none" stroke="#7f0000" stroke-width="4"/>
<rect x="116.75" y="22.75" width="58.5" height="21.2" rx="4" fill="none" stroke="#7f0000" stroke-width="3.5"/>
<rect x="56" y="263" width="600" height="1.2" fill="#217346"/>
<rect x="653" y="549" width="4" height="4" fill="#217346"/>
<rect x="56" y="261" width="600.8" height="289" rx="3.5" fill="none" stroke="#7f0000" stroke-width="4.2"/>
<circle cx="43.5" cy="256" r="18" fill="#808080"/>
<circle cx="177" cy="52.5" r="18" fill="#808080"/>
<circle cx="53.5" cy="118" r="18" fill="#808080"/>
<path d="M43.2 246.8 L46.8 246.8 L46.8 264.3 L42.7 264.3 L42.7 252.6 Q40.6 254.2 38 255 L38 251.2 Q41.6 249.8 43.2 246.8 Z" fill="#ff0000"/>
<text x="170.70" y="60.4" font-size="25" fill="#ff0000" font-weight="bold" textLength="13.90" lengthAdjust="spacingAndGlyphs">2</text>
<text x="46.70" y="126.2" font-size="25" fill="#ff0000" font-weight="bold" textLength="13.90" lengthAdjust="spacingAndGlyphs">3</text>
<g>
<rect x="278.5" y="531" width="142.5" height="31.5" fill="#fff" opacity="0.3"/>
<path d="M292.3 531 L292.3 546.3 L279 554 L279 538.6 Z" fill="#7f95d8" opacity="0.5"/>
<path d="M292.3 531 L305.6 538.6 L305.6 554 L292.3 546.3 Z" fill="#8f98a8" opacity="0.45"/>
<path d="M279 554 L292.3 546.3 L305.6 554 L292.3 561.7 Z" fill="#c9d2e8" opacity="0.5"/>
<path d="M287 542 L292.3 539 L297.6 542 L297.6 550 L292.3 553 L287 550 Z" fill="#b8c0d0" opacity="0.5"/>
</g>
<g opacity="0.55"><text x="311.50" y="547.6" font-size="21" fill="#6f86d8" font-weight="bold" textLength="106.58" lengthAdjust="spacingAndGlyphs">exceldemy</text>
<text x="323.00" y="558.8" font-size="7" fill="#bdbdbd" font-weight="bold" textLength="82.23" lengthAdjust="spacingAndGlyphs">EXCEL - DATA - BI</text></g>
</svg>
</body></html>
